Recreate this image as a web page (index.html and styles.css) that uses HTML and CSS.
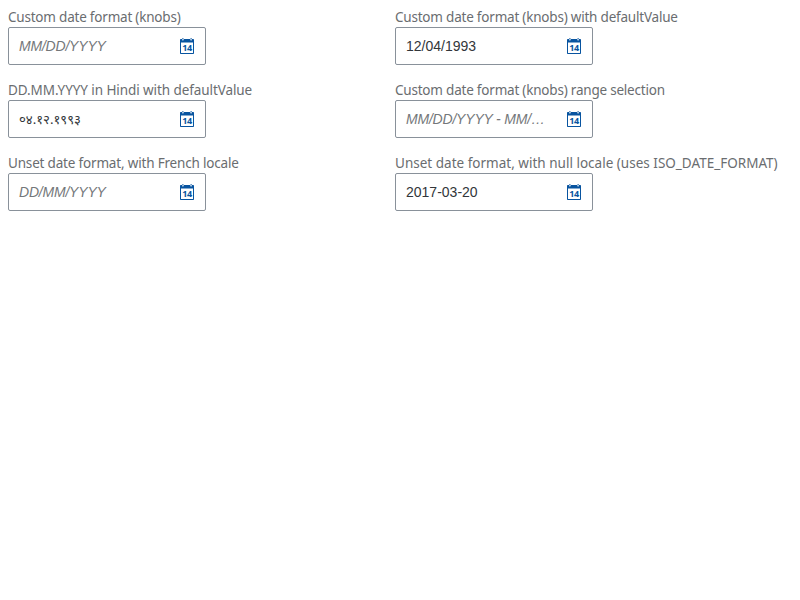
FILE: index.html
```html
<!DOCTYPE html>
<html lang="en">
<head>
<meta charset="utf-8">
<title>Date pickers</title>
<link rel="stylesheet" href="styles.css">
</head>
<body>
<svg width="0" height="0" class="defs"><symbol id="cal" viewBox="0 0 14 16"><path fill="#0854a0" fill-rule="evenodd" d="M0 1.8Q0 1 .8 1H2V1.5Q2 2.4 2.9 2.4T3.8 1.5V1H10.2V1.5Q10.2 2.4 11.1 2.4T12 1.5V1H13.2Q14 1 14 1.8V15.2Q14 16 13.2 16H.8Q0 16 0 15.2ZM1 4.5V15H13V4.5Z"/><path d="M2.9 0V1.5M11.1 0V1.5" stroke="#0854a0"/></symbol></svg>
<main class="grid">
<div class="field"><label class="tight">Custom date format (knobs)</label><div class="box"><span class="value placeholder">MM/DD/YYYY</span><svg class="icon"><use href="#cal"/><text x="7" y="13" class="day">14</text></svg></div></div>
<div class="field"><label class="tight">Custom date format (knobs) with defaultValue</label><div class="box"><span class="value">12/04/1993</span><svg class="icon"><use href="#cal"/><text x="7" y="13" class="day">14</text></svg></div></div>
<div class="field"><label class="caps">DD.MM.YYYY in Hindi with defaultValue</label><div class="box"><span class="value hindi">०४.१२.१९९३</span><svg class="icon"><use href="#cal"/><text x="7" y="13" class="day">14</text></svg></div></div>
<div class="field"><label class="tight">Custom date format (knobs) range selection</label><div class="box"><span class="value placeholder">MM/DD/YYYY - MM/…</span><svg class="icon"><use href="#cal"/><text x="7" y="13" class="day">14</text></svg></div></div>
<div class="field"><label class="snug">Unset date format, with French locale</label><div class="box"><span class="value placeholder">DD/MM/YYYY</span><svg class="icon"><use href="#cal"/><text x="7" y="13" class="day">14</text></svg></div></div>
<div class="field"><label>Unset date format, with null locale (uses ISO_DATE_FORMAT)</label><div class="box"><span class="value">2017-03-20</span><svg class="icon"><use href="#cal"/><text x="7" y="13" class="day">14</text></svg></div></div>
</main>
</body>
</html>
```
FILE: styles.css
```css
body { margin: 8px; background: #fff; font: 13.5px/18px "Noto Sans", sans-serif; color: #32363a; }
.defs { position: absolute; }
.grid { display: grid; grid-template-columns: 387px 1fr; row-gap: 16px; }
.field { height: 57px; }
label { display: block; height: 19px; color: #6a6d70; white-space: nowrap; letter-spacing: .01px; }
.tight { letter-spacing: -.21px; }
.snug { letter-spacing: -.18px; }
.caps { letter-spacing: -.08px; }
.box { box-sizing: border-box; width: 198px; height: 38px; border: 1px solid #89919a; border-radius: 2px; display: flex; align-items: center; padding: 0 11px 0 10px; justify-content: space-between; }
.value { width: 142px; white-space: nowrap; font-family: "Liberation Sans", sans-serif; font-size: 14px; }
.placeholder { font-style: italic; color: #74777a; letter-spacing: -.2px; }
.hindi { font-family: "Noto Sans", sans-serif; font-size: 13.2px; }
.icon { width: 14px; height: 16px; }
.day { font: bold 9px "Noto Sans", sans-serif; letter-spacing: -.3px; fill: #0854a0; text-anchor: middle; }
```
